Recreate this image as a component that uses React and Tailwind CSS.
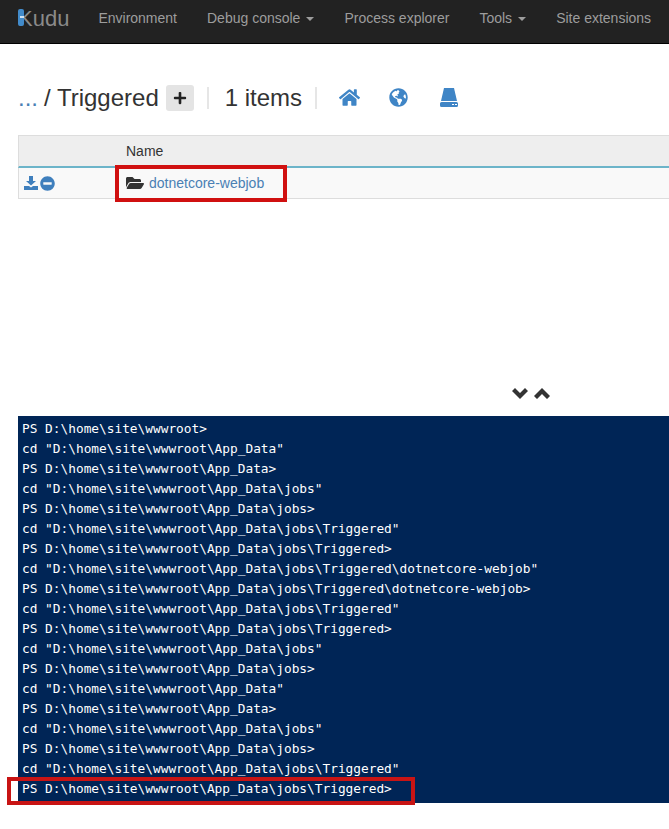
import { FaHome, FaGlobeAmericas, FaFolderOpen, FaMinusCircle, FaPlus } from "react-icons/fa";

const consoleLines = [
  "PS D:\\home\\site\\wwwroot>",
  'cd "D:\\home\\site\\wwwroot\\App_Data"',
  "PS D:\\home\\site\\wwwroot\\App_Data>",
  'cd "D:\\home\\site\\wwwroot\\App_Data\\jobs"',
  "PS D:\\home\\site\\wwwroot\\App_Data\\jobs>",
  'cd "D:\\home\\site\\wwwroot\\App_Data\\jobs\\Triggered"',
  "PS D:\\home\\site\\wwwroot\\App_Data\\jobs\\Triggered>",
  'cd "D:\\home\\site\\wwwroot\\App_Data\\jobs\\Triggered\\dotnetcore-webjob"',
  "PS D:\\home\\site\\wwwroot\\App_Data\\jobs\\Triggered\\dotnetcore-webjob>",
  'cd "D:\\home\\site\\wwwroot\\App_Data\\jobs\\Triggered"',
  "PS D:\\home\\site\\wwwroot\\App_Data\\jobs\\Triggered>",
  'cd "D:\\home\\site\\wwwroot\\App_Data\\jobs"',
  "PS D:\\home\\site\\wwwroot\\App_Data\\jobs>",
  'cd "D:\\home\\site\\wwwroot\\App_Data"',
  "PS D:\\home\\site\\wwwroot\\App_Data>",
  'cd "D:\\home\\site\\wwwroot\\App_Data\\jobs"',
  "PS D:\\home\\site\\wwwroot\\App_Data\\jobs>",
  'cd "D:\\home\\site\\wwwroot\\App_Data\\jobs\\Triggered"',
  "PS D:\\home\\site\\wwwroot\\App_Data\\jobs\\Triggered>",
];

function Caret() {
  return <span className="inline-block ml-[6px] align-middle w-0 h-0 border-x-[4px] border-x-transparent border-t-[4px] border-t-[#9d9d9d]" />;
}

function DownloadIcon() {
  return (
    <svg width="14" height="14" viewBox="0 0 14 14" fill="#3f7fbd">
      <path d="M5 0h4v5h3L7 9.500 2 5h3z" />
      <path d="M0 10h5l2 1.500L9 10h5v4H0z" />
    </svg>
  );
}

function DriveIcon() {
  return (
    <svg width="18" height="19" viewBox="0 0 18 19" fill="#3f85c6">
      <path d="M4 0h10l3 13H1z" />
      <path fillRule="evenodd" d="M1.500 14h15a1.500 1.500 0 0 1 1.500 1.500v2a1.500 1.500 0 0 1-1.500 1.500h-15A1.500 1.500 0 0 1 0 17.500v-2A1.500 1.500 0 0 1 1.500 14zM12 16v1h2v-1zM15 16v1h2v-1z" />
    </svg>
  );
}

function ChevronDown() {
  return (
    <svg width="16" height="11" viewBox="0 0 16 11" fill="#333">
      <path d="M0 3l3-3 5 5 5-5 3 3-8 8z" />
    </svg>
  );
}

function ChevronUp() {
  return (
    <svg width="16" height="11" viewBox="0 0 16 11" fill="#333">
      <path d="M0 8l3 3 5-5 5 5 3-3-8-8z" />
    </svg>
  );
}

export default function App() {
  return (
    <div className="relative h-[829px] w-[669px] overflow-hidden bg-white font-['Liberation_Sans',Arial,sans-serif] text-[#333]">
      <nav className="flex h-[44px] items-center border-b border-black bg-[#222] pb-[6px] text-[14px] text-[#9d9d9d]">
        <span className="relative ml-[18px] text-[22px] leading-none text-[#8a8a8a]">
          Kudu
          <span className="absolute left-0 top-[1px] flex h-[17px] w-[6px] items-center rounded-[2px] bg-[#428bca]">
            <span className="ml-[2px] h-[2px] w-[4px] bg-[#cfe2f3]" />
          </span>
        </span>
        <span className="ml-[29px]">Environment</span>
        <span className="ml-[30px]">Debug console<Caret /></span>
        <span className="ml-[30px]">Process explorer</span>
        <span className="ml-[30px]">Tools<Caret /></span>
        <span className="ml-[30px] whitespace-nowrap">Site extensions</span>
      </nav>

      <div className="mt-[36px] flex h-[35px] items-center pl-[18px] text-[24px] leading-none">
        <span className="text-[#4a80b4]">...</span>
        <span className="ml-[6px]">/ Triggered</span>
        <span className="ml-[7px] flex h-[26px] w-[28px] items-center justify-center rounded-[3px] bg-[#e4e4e4] text-[#222]">
          <FaPlus size={14} />
        </span>
        <span className="ml-[13px] h-[22px] w-[2px] bg-[#e6e6e6]" />
        <span className="ml-[16px]">1 items</span>
        <span className="ml-[13px] h-[22px] w-[2px] bg-[#e6e6e6]" />
        <span className="ml-[22px] text-[#3f85c6]"><FaHome size={21} /></span>
        <span className="ml-[29px] text-[#3f85c6]"><FaGlobeAmericas size={19} /></span>
        <span className="ml-[32px]"><DriveIcon /></span>
      </div>

      <div className="ml-[18px] mt-[20px] text-[14px]">
        <div className="flex h-[33px] items-center border-y border-l border-[#ddd] border-b-[2px] border-b-[#6cb4c9] bg-[#eee] pl-[107px]">Name</div>
        <div className="flex h-[31px] items-center border-b border-l border-[#ddd] bg-[#f9f9f9]">
          <span className="ml-[5px] flex items-center gap-[2px] text-[#3f7fbd]">
            <DownloadIcon />
            <FaMinusCircle size={15} />
          </span>
          <span className="ml-[71px] flex items-center text-[#4a80b4]">
            <span className="text-[#333]"><FaFolderOpen size={18} /></span>
            <span className="ml-[5px]">dotnetcore-webjob</span>
          </span>
        </div>
      </div>

      <div className="mt-[189px] flex justify-end gap-[6px] pr-[119px]">
        <ChevronDown />
        <ChevronUp />
      </div>

      <div className="ml-[18px] mt-[17px] h-[387px] bg-[#002556] pl-[4px] pt-[3px] font-['DejaVu_Sans_Mono',monospace] text-[12.8px] leading-[20px] text-white">
        {consoleLines.map((line, i) => (
          <div key={i} className="whitespace-pre">{line}</div>
        ))}
      </div>

      <div className="absolute left-[115px] top-[165px] h-[37px] w-[172px] border-[4px] border-[#d01010]" />
      <div className="absolute left-[7px] top-[777px] h-[28px] w-[408px] border-[4px] border-[#c81414]" />
    </div>
  );
}
